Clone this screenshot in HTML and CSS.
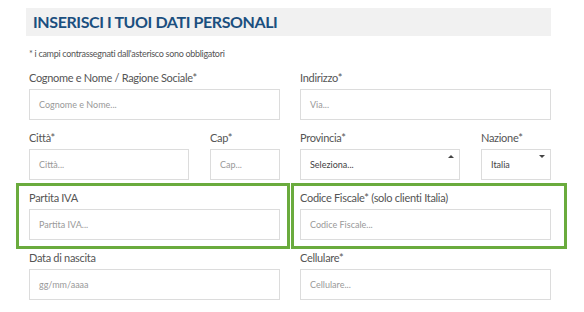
FILE: index.html
```html
<!DOCTYPE html>
<html lang="it">
<head>
    <meta charset="UTF-8">
    <title>Dati personali</title>
    <link rel="stylesheet" href="styles.css">
</head>
<body>
    <div class="form-wrap">
        <div class="section-head">INSERISCI I TUOI DATI PERSONALI</div>
        <div class="note">* i campi contrassegnati dall'asterisco sono obbligatori</div>

        <div class="row first">
            <div class="field">
                <label>Cognome e Nome / Ragione Sociale*</label>
                <div class="input">Cognome e Nome...</div>
            </div>
            <div class="field">
                <label>Indirizzo*</label>
                <div class="input">Via...</div>
            </div>
        </div>

        <div class="row">
            <div class="pair">
                <div class="field wide">
                    <label>Città*</label>
                    <div class="input">Città...</div>
                </div>
                <div class="field narrow">
                    <label>Cap*</label>
                    <div class="input">Cap...</div>
                </div>
            </div>
            <div class="pair">
                <div class="field wide">
                    <label>Provincia*</label>
                    <div class="input select up">Seleziona...</div>
                </div>
                <div class="field narrow">
                    <label>Nazione*</label>
                    <div class="input select down">Italia</div>
                </div>
            </div>
        </div>

        <div class="row">
            <div class="field marked marked-left">
                <label>Partita IVA</label>
                <div class="input">Partita IVA...</div>
            </div>
            <div class="field marked marked-right">
                <label>Codice Fiscale* (solo clienti Italia)</label>
                <div class="input">Codice Fiscale...</div>
            </div>
        </div>

        <div class="row">
            <div class="field">
                <label>Data di nascita</label>
                <div class="input">gg/mm/aaaa</div>
            </div>
            <div class="field">
                <label>Cellulare*</label>
                <div class="input">Cellulare...</div>
            </div>
        </div>
    </div>
</body>
</html>
```

FILE: styles.css
```css
* {
    margin: 0;
    padding: 0;
    box-sizing: border-box;
}

body {
    font-family: 'Lato', 'Open Sans', sans-serif;
    background: #fff;
    color: #555;
}

.form-wrap {
    width: 525px;
    margin: 8px 0 0 26px;
}

.section-head {
    background: #f1f1f1;
    height: 28px;
    line-height: 28px;
    padding-left: 7px;
    font-size: 16px;
    letter-spacing: -0.4px;
    font-weight: bold;
    color: #1b4f7f;
}

.note {
    font-size: 9px;
    letter-spacing: -0.3px;
    color: #555;
    margin: 12px 0 0 3px;
    line-height: 12px;
}

.row {
    display: flex;
    gap: 20px;
    margin-left: 3px;
    margin-bottom: 10px;
}

.row.first {
    margin-top: 10px;
}

.field {
    width: 251px;
    position: relative;
}

.pair {
    width: 251px;
    display: flex;
    justify-content: space-between;
}

.field.wide {
    width: 160px;
}

.field.narrow {
    width: 70px;
}

label {
    display: block;
    font-size: 11px;
    letter-spacing: -0.3px;
    line-height: 16px;
    margin-bottom: 3px;
    color: #555;
}

.input {
    height: 31px;
    border: 1px solid #dcdcdc;
    background: #fff;
    padding-left: 9px;
    line-height: 29px;
    font-size: 9px;
    color: #999;
    position: relative;
}

.select {
    color: #444;
}

.select::after {
    content: "";
    position: absolute;
    right: 5px;
    top: 5px;
    border-left: 3px solid transparent;
    border-right: 3px solid transparent;
}

.select.up::after {
    border-bottom: 3px solid #444;
}

.select.down::after {
    border-top: 3px solid #444;
}

/* green highlight frames over the tax fields */
.marked::before {
    content: "";
    position: absolute;
    top: -7px;
    bottom: -9px;
    border: 3px solid #6aab3d;
    pointer-events: none;
}

.marked-left::before {
    left: -13px;
    right: -10px;
}

.marked-right::before {
    left: -9px;
    right: -16px;
}
```
